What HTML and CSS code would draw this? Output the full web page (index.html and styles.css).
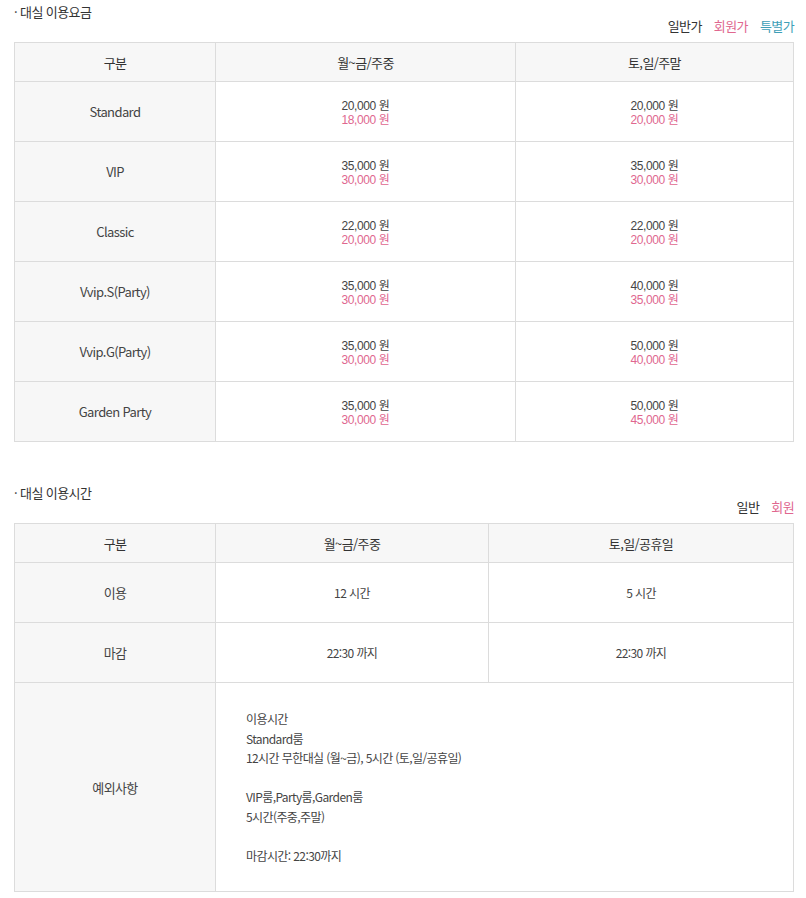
FILE: index.html
```html
<!DOCTYPE html>
<html lang="ko">
<head>
<meta charset="utf-8">
<link rel="stylesheet" href="styles.css">
</head>
<body>
<div class="page">
  <section class="block">
    <div class="block-head">
      <h3 class="block-title">· 대실 이용요금</h3>
      <div class="legend"><span class="c-normal">일반가</span><span class="c-member">회원가</span><span class="c-special">특별가</span></div>
    </div>
    <table class="tbl tbl-price">
      <colgroup><col class="c1"><col class="c2"><col></colgroup>
      <thead>
        <tr><th>구분</th><th>월~금/주중</th><th>토,일/주말</th></tr>
      </thead>
      <tbody>
        <tr><th>Standard</th><td><span class="p">20,000 원</span><span class="p m">18,000 원</span></td><td><span class="p">20,000 원</span><span class="p m">20,000 원</span></td></tr>
        <tr><th>VIP</th><td><span class="p">35,000 원</span><span class="p m">30,000 원</span></td><td><span class="p">35,000 원</span><span class="p m">30,000 원</span></td></tr>
        <tr><th>Classic</th><td><span class="p">22,000 원</span><span class="p m">20,000 원</span></td><td><span class="p">22,000 원</span><span class="p m">20,000 원</span></td></tr>
        <tr><th>Vvip.S(Party)</th><td><span class="p">35,000 원</span><span class="p m">30,000 원</span></td><td><span class="p">40,000 원</span><span class="p m">35,000 원</span></td></tr>
        <tr><th>Vvip.G(Party)</th><td><span class="p">35,000 원</span><span class="p m">30,000 원</span></td><td><span class="p">50,000 원</span><span class="p m">40,000 원</span></td></tr>
        <tr><th>Garden Party</th><td><span class="p">35,000 원</span><span class="p m">30,000 원</span></td><td><span class="p">50,000 원</span><span class="p m">45,000 원</span></td></tr>
      </tbody>
    </table>
  </section>

  <section class="block block-2">
    <div class="block-head">
      <h3 class="block-title">· 대실 이용시간</h3>
      <div class="legend"><span class="c-normal">일반</span><span class="c-member">회원</span></div>
    </div>
    <table class="tbl tbl-time">
      <colgroup><col class="c1"><col class="c2t"><col></colgroup>
      <thead>
        <tr><th>구분</th><th>월~금/주중</th><th>토,일/공휴일</th></tr>
      </thead>
      <tbody>
        <tr><th>이용</th><td class="small">12 시간</td><td class="small">5 시간</td></tr>
        <tr><th>마감</th><td class="small">22:30 까지</td><td class="small">22:30 까지</td></tr>
        <tr class="note-row"><th>예외사항</th><td colspan="2" class="note">
          <p>이용시간<br>Standard룸<br>12시간 무한대실 (월~금), 5시간 (토,일/공휴일)</p>
          <p>VIP룸,Party룸,Garden룸<br>5시간(주중,주말)</p>
          <p>마감시간: 22:30까지</p>
        </td></tr>
      </tbody>
    </table>
  </section>
</div>
</body>
</html>
```

FILE: styles.css
```css
* { box-sizing: border-box; }
html, body { margin: 0; padding: 0; background: #fff; }
body {
  font-family: "Noto Sans CJK KR", "Noto Sans", sans-serif;
  color: #444;
  font-size: 13px;
  letter-spacing: -0.6px;
}
.page { padding: 0 12px 0 14px; }
.block-2 { margin-top: 39px; }
.block-head {
  height: 42px;
  display: flex;
  justify-content: space-between;
}
.block-title {
  margin: 0;
  padding-top: 3px;
  font-size: 13px;
  font-weight: 400;
  line-height: 18px;
  color: #333;
}
.legend {
  align-self: flex-end;
  margin-bottom: 8px;
  line-height: 16px;
  font-size: 13px;
  display: flex;
  gap: 12px;
}
.c-normal { color: #333; }
.c-member { color: #e0678f; }
.c-special { color: #3e9fb8; }

.tbl {
  width: 100%;
  border-collapse: collapse;
  table-layout: fixed;
}
.tbl col.c1 { width: 201px; }
.tbl col.c2 { width: 300px; }
.tbl col.c2t { width: 273px; }
.tbl th, .tbl td {
  border: 1px solid #dcdcdc;
  text-align: center;
  vertical-align: middle;
  font-weight: 400;
  padding: 0;
}
.tbl thead th {
  height: 39px;
  background: #f7f7f7;
  font-size: 13px;
  color: #333;
}
.tbl tbody th {
  background: #f7f7f7;
  font-size: 13px;
  color: #444;
}
.tbl tbody tr { height: 60px; }
.tbl-price td { padding-top: 2px; }
.p {
  display: block;
  font-family: "Liberation Sans", "Noto Sans CJK KR", sans-serif;
  font-size: 12px;
  line-height: 14px;
  letter-spacing: -0.4px;
  color: #444;
}
.p.m { color: #e0678f; }
.small { font-size: 12px; }
.tbl tbody tr.note-row { height: 205px; }
.tbl td.note {
  text-align: left;
  padding: 26px 30px;
  font-size: 12px;
  line-height: 19.5px;
}
.note p { margin: 0 0 19.5px; }
.note p:last-child { margin-bottom: 0; }
```
